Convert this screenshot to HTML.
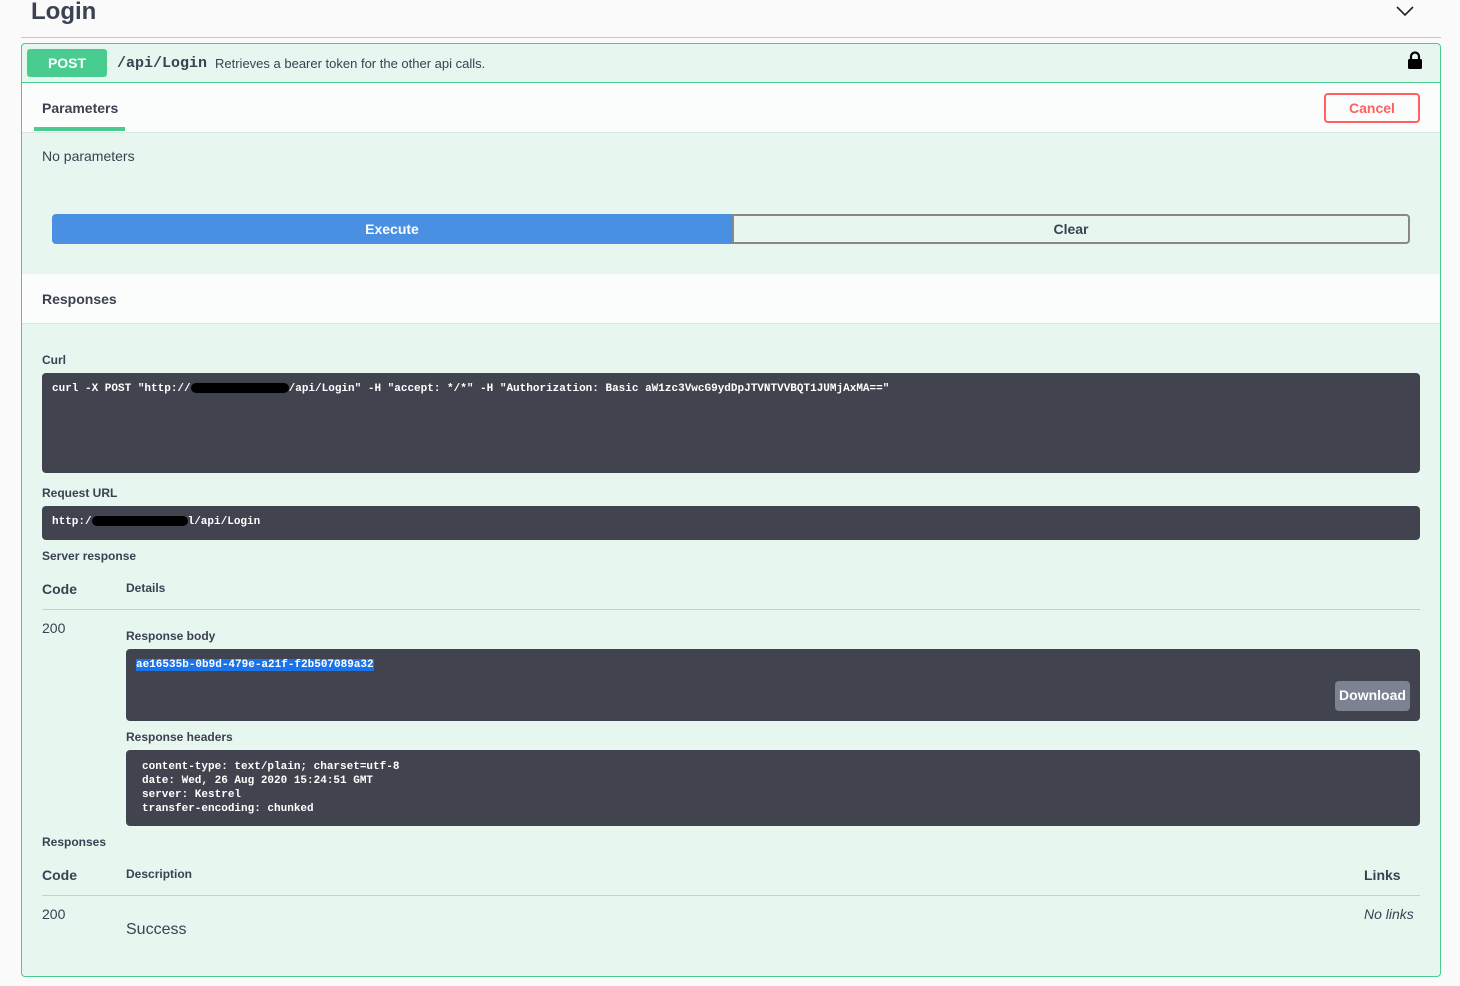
<!DOCTYPE html>
<html><head><meta charset="utf-8"><style>
*{box-sizing:border-box;margin:0;padding:0}
body{width:1460px;height:986px;background:#fafafa;font-family:"Liberation Sans",sans-serif;color:#3b4151;position:relative;overflow:hidden}
.a{position:absolute}
.mono{font-family:"Liberation Mono",monospace}
.lbl{font-size:12px;font-weight:bold;color:#3b4151}
.code{background:#41444e;border-radius:4px;color:#fff;font-family:"Liberation Mono",monospace;font-size:11px;font-weight:bold}
.hd{font-size:14px;font-weight:bold}
</style></head><body>
<div class="a" style="left:31px;top:-2px;font-size:24px;font-weight:bold;color:#3b4151">Login</div>
<svg class="a" style="left:1396px;top:5px" width="18" height="12" viewBox="0 0 18 12"><path d="M1 2 L9 10 L17 2" fill="none" stroke="#222" stroke-width="1.6"/></svg>
<div class="a" style="left:21px;top:37px;width:1420px;height:1px;background:#c8c8c8"></div>

<div class="a" style="left:21px;top:43px;width:1420px;height:934px;background:#e8f6f0;border:1px solid #49cc90;border-radius:4px"></div>
<div class="a" style="left:22px;top:82px;width:1418px;height:1px;background:#49cc90"></div>
<div class="a" style="left:27px;top:49px;width:80px;height:28px;background:#49cc90;border-radius:3px;color:#fff;font-weight:bold;font-size:14px;text-align:center;line-height:28px">POST</div>
<div class="a mono" style="left:117px;top:55px;font-size:15px;font-weight:bold;color:#3b4151">/api/Login</div>
<div class="a" style="left:215px;top:56px;font-size:13px;color:#3b4151">Retrieves a bearer token for the other api calls.</div>
<svg class="a" style="left:1407px;top:51px" width="16" height="19" viewBox="0 0 16 19"><path d="M4 8 V5.5 a4 4 0 0 1 8 0 V8" fill="none" stroke="#000" stroke-width="2.2"/><rect x="1" y="8" width="14" height="10" rx="1.5" fill="#000"/></svg>

<div class="a" style="left:22px;top:83px;width:1418px;height:50px;background:rgba(255,255,255,.8);border-bottom:1px solid #dde6e2"></div>
<div class="a hd" style="left:42px;top:100px">Parameters</div>
<div class="a" style="left:34px;top:127px;width:91px;height:4px;background:#49cc90"></div>
<div class="a" style="left:1324px;top:93px;width:96px;height:30px;border:2px solid #ff6060;border-radius:4px;color:#ff6060;font-weight:bold;font-size:14px;text-align:center;line-height:26px;background:transparent">Cancel</div>

<div class="a" style="left:42px;top:148px;font-size:14px">No parameters</div>
<div class="a" style="left:52px;top:214px;width:680px;height:30px;background:#4990e2;color:#fff;font-weight:bold;font-size:14px;text-align:center;line-height:30px;border-radius:4px 0 0 4px">Execute</div>
<div class="a" style="left:732px;top:214px;width:678px;height:30px;border:2px solid #888;border-radius:0 4px 4px 0;font-weight:bold;font-size:14px;text-align:center;line-height:26px">Clear</div>

<div class="a" style="left:22px;top:274px;width:1418px;height:50px;background:rgba(255,255,255,.8);border-bottom:1px solid #dde6e2"></div>
<div class="a hd" style="left:42px;top:291px">Responses</div>

<div class="a lbl" style="left:42px;top:353px">Curl</div>
<div class="a code" style="left:42px;top:373px;width:1378px;height:100px;padding:10px">curl -X POST "http://<span style="display:inline-block;width:98px;height:10px;background:#000;border-radius:5px;vertical-align:middle"></span>/api/Login" -H "accept: */*" -H "Authorization: Basic aW1zc3VwcG9ydDpJTVNTVVBQT1JUMjAxMA=="</div>
<div class="a lbl" style="left:42px;top:486px">Request URL</div>
<div class="a code" style="left:42px;top:506px;width:1378px;height:34px;padding:10px">http:/<span style="display:inline-block;width:96px;height:10px;background:#000;border-radius:5px;vertical-align:middle"></span>l/api/Login</div>
<div class="a lbl" style="left:42px;top:549px">Server response</div>
<div class="a hd" style="left:42px;top:581px">Code</div>
<div class="a lbl" style="left:126px;top:581px">Details</div>
<div class="a" style="left:42px;top:609px;width:1378px;height:1px;background:#c7cfcb"></div>
<div class="a" style="left:42px;top:620px;font-size:14px">200</div>
<div class="a lbl" style="left:126px;top:629px">Response body</div>
<div class="a code" style="left:126px;top:649px;width:1294px;height:72px;padding:10px"><span style="background:#1a73e8">ae16535b-0b9d-479e-a21f-f2b507089a32</span></div>
<div class="a" style="left:1335px;top:681px;width:75px;height:30px;background:#7d8293;border-radius:4px;color:#fff;font-weight:bold;font-size:14px;text-align:center;line-height:28px">Download</div>
<div class="a lbl" style="left:126px;top:730px">Response headers</div>
<div class="a code" style="left:126px;top:750px;width:1294px;height:76px;padding:10px 16px;line-height:14px">content-type: text/plain; charset=utf-8<br>date: Wed, 26 Aug 2020 15:24:51 GMT<br>server: Kestrel<br>transfer-encoding: chunked</div>
<div class="a lbl" style="left:42px;top:835px">Responses</div>
<div class="a hd" style="left:42px;top:867px">Code</div>
<div class="a lbl" style="left:126px;top:867px">Description</div>
<div class="a hd" style="left:1364px;top:867px">Links</div>
<div class="a" style="left:42px;top:895px;width:1378px;height:1px;background:#c7cfcb"></div>
<div class="a" style="left:42px;top:906px;font-size:14px">200</div>
<div class="a" style="left:126px;top:921px;font-size:16px">Success</div>
<div class="a" style="left:1364px;top:906px;font-size:14px;font-style:italic">No links</div>
</body></html>
